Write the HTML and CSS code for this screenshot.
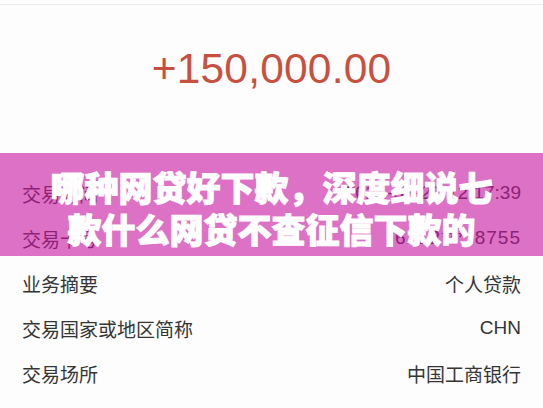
FILE: index.html
```html
<!DOCTYPE html>
<html lang="zh-CN">
<head>
<meta charset="utf-8">
<title>交易详情</title>
<link rel="stylesheet" href="styles.css">
</head>
<body>
<div class="page">
  <div class="topbar"></div>
  <section class="amount-section">
    <div class="amount">+150,000.00</div>
  </section>
  <ul class="detail-list">
    <li class="row"><span class="label">交易时间</span><span class="value">2024-02-21 12:17:39</span></li>
    <li class="row"><span class="label">交易卡号</span><span class="value card">6212****8755</span></li>
    <li class="row"><span class="label">业务摘要</span><span class="value">个人贷款</span></li>
    <li class="row"><span class="label">交易国家或地区简称</span><span class="value">CHN</span></li>
    <li class="row"><span class="label">交易场所</span><span class="value">中国工商银行</span></li>
    <li class="row"><span class="label">交易金额</span><span class="value">150,000.00</span></li>
  </ul>
  <div class="banner">
    <h1 class="banner-title">哪种网贷好下款，深度细说七款什么网贷不查征信下款的</h1>
  </div>
</div>
</body>
</html>
```

FILE: styles.css
```css
* { box-sizing: border-box; }
html, body {
  margin: 0;
  padding: 0;
  background: #ffffff;
}
body {
  width: 543px;
  height: 408px;
  overflow: hidden;
  font-family: "Liberation Sans", "Noto Sans CJK SC", sans-serif;
}
.page {
  position: relative;
  width: 543px;
  height: 408px;
  overflow: hidden;
  background: #fdfdfd;
}
.topbar {
  height: 5px;
  border-bottom: 1px solid #ececec;
  background: #ffffff;
}
.amount-section {
  height: 165.5px;
  padding-top: 39px;
  text-align: center;
}
.amount {
  font-family: "Liberation Sans", sans-serif;
  font-size: 42.5px;
  line-height: 50px;
  color: #c8503f;
  letter-spacing: 0.2px;
}
.detail-list {
  list-style: none;
  margin: 0;
  padding: 0;
}
.row {
  height: 45px;
  display: flex;
  align-items: center;
  justify-content: space-between;
  padding: 0 22px;
  font-size: 19px;
  color: #353535;
}
.label, .value {
  white-space: nowrap;
}
.card {
  letter-spacing: 1px;
}
.banner {
  position: absolute;
  left: 0;
  right: 0;
  top: 153px;
  height: 103px;
  padding-top: 6px;
  display: flex;
  align-items: center;
  justify-content: center;
  background: rgba(200, 20, 160, 0.6);
}
.banner-title {
  margin: 0;
  max-width: 460px;
  text-align: center;
  font-family: "Noto Sans CJK SC", sans-serif;
  font-weight: 900;
  font-size: 34px;
  line-height: 42px;
  color: #ffffff;
  -webkit-text-stroke: 1px #ffffff;
}
```
